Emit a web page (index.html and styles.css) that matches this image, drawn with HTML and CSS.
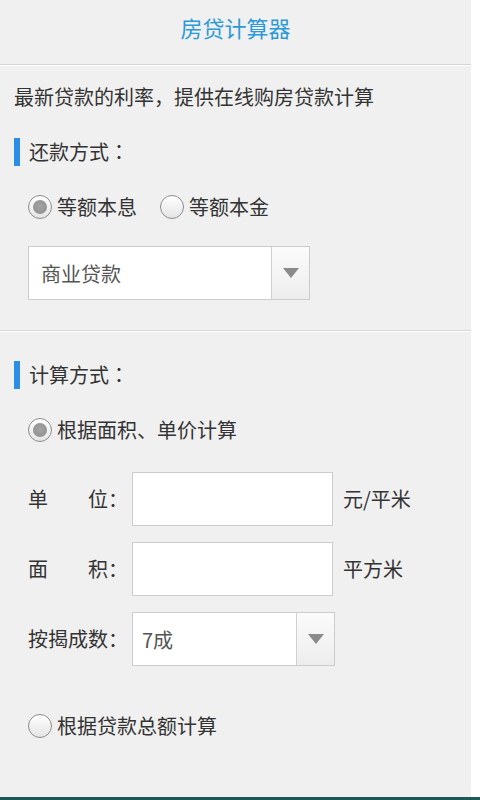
FILE: index.html
```html
<!DOCTYPE html>
<html lang="zh-CN">
<head>
<meta charset="utf-8">
<title>房贷计算器</title>
<link rel="stylesheet" href="styles.css">
</head>
<body>
<div class="screen">
  <div class="app">
    <header class="topbar"><h1 class="title">房贷计算器</h1></header>
    <p class="intro">最新贷款的利率<span class="punct">，</span>提供在线购房贷款计算</p>

    <section class="section first">
      <h2 class="sec-title">还款方式<span class="punct">：</span></h2>
      <div class="radio-row">
        <label class="radio checked"><span class="dot"></span>等额本息</label>
        <label class="radio"><span class="dot"></span>等额本金</label>
      </div>
      <div class="select wide">
        <span class="select-text">商业贷款</span>
        <span class="select-btn"><span class="tri"></span></span>
      </div>
    </section>

    <section class="section second">
      <h2 class="sec-title">计算方式<span class="punct">：</span></h2>
      <div class="radio-row">
        <label class="radio checked"><span class="dot"></span>根据面积、单价计算</label>
      </div>
      <div class="form">
        <div class="form-row">
          <span class="form-label">单　　位<span class="punct">：</span></span>
          <span class="input"></span>
          <span class="unit">元/平米</span>
        </div>
        <div class="form-row">
          <span class="form-label">面　　积<span class="punct">：</span></span>
          <span class="input"></span>
          <span class="unit">平方米</span>
        </div>
        <div class="form-row">
          <span class="form-label">按揭成数<span class="punct">：</span></span>
          <div class="select narrow">
            <span class="select-text">7成</span>
            <span class="select-btn"><span class="tri"></span></span>
          </div>
        </div>
      </div>
      <div class="radio-row last">
        <label class="radio"><span class="dot"></span>根据贷款总额计算</label>
      </div>
    </section>
  </div>
  <div class="bottom-bar"></div>
</div>
</body>
</html>
```

FILE: styles.css
```css
* { box-sizing: border-box; }

html, body {
  margin: 0;
  padding: 0;
  background: #ffffff;
}

body {
  font-family: "Noto Sans CJK SC", "Noto Sans", "Liberation Sans", sans-serif;
  color: #333333;
}

.punct {
  font-family: "Noto Sans CJK TC", "Noto Sans CJK SC", sans-serif;
}

.screen {
  width: 480px;
  height: 800px;
  display: flex;
  flex-direction: column;
  overflow: hidden;
}

.app {
  width: 471px;
  height: 797px;
  background: #f0f0f0;
  overflow: hidden;
}

.bottom-bar {
  height: 3px;
  width: 480px;
  background: #1c5a57;
}

.topbar {
  height: 65px;
  border-bottom: 1px solid #d4d4d4;
  box-shadow: 0 1px 0 #ffffff;
  padding-top: 12px;
}

.title {
  margin: 0;
  text-align: center;
  font-size: 22px;
  font-weight: normal;
  line-height: 30px;
  color: #2c9ad6;
}

.intro {
  margin: 18px 0 0 14px;
  font-size: 20px;
  line-height: 28px;
  color: #333333;
  white-space: nowrap;
}

.section.first {
  padding-bottom: 30px;
  border-bottom: 1px solid #d6d6d6;
}

.section.second {
  border-top: 1px solid #ffffff;
}

.sec-title {
  margin: 27px 0 0 14px;
  display: flex;
  align-items: center;
  height: 28px;
  font-size: 20px;
  font-weight: normal;
  line-height: 28px;
  color: #333333;
}

.section.second .sec-title {
  margin-top: 29px;
}

.sec-title::before {
  content: "";
  width: 6px;
  height: 28px;
  background: #2a8ee6;
  margin-right: 9px;
}

.radio-row {
  margin: 27px 0 0 28px;
  display: flex;
  align-items: center;
  gap: 23px;
  height: 28px;
}

.radio-row.last {
  margin-top: 46px;
}

.radio {
  display: flex;
  align-items: center;
  font-size: 20px;
  line-height: 28px;
  color: #333333;
  white-space: nowrap;
}

.dot {
  width: 24px;
  height: 24px;
  border-radius: 50%;
  border: 1.5px solid #8c8c8c;
  background: linear-gradient(#ffffff, #e4e4e4);
  margin-right: 5px;
  display: flex;
  align-items: center;
  justify-content: center;
  flex: none;
}

.radio.checked .dot::after {
  content: "";
  width: 14px;
  height: 14px;
  border-radius: 50%;
  background: radial-gradient(circle at 50% 45%, #a3a3a3, #8e8e8e);
}

.select {
  display: flex;
  height: 54px;
  border: 1px solid #cccccc;
  background: #ffffff;
}

.select.wide {
  margin: 25px 0 0 28px;
  width: 282px;
}

.select.narrow {
  width: 203px;
}

.select-text {
  flex: 1;
  display: flex;
  align-items: center;
  padding-left: 12px;
  font-size: 20px;
  color: #555555;
}

.select.narrow .select-text {
  padding-left: 9px;
}

.select-btn {
  width: 38px;
  border-left: 1px solid #d0d0d0;
  background: linear-gradient(#fbfbfb, #ededed);
  display: flex;
  align-items: center;
  justify-content: center;
}

.tri {
  width: 0;
  height: 0;
  border-left: 8px solid transparent;
  border-right: 8px solid transparent;
  border-top: 10px solid #8a8a8a;
}

.form {
  margin: 28px 0 0 28px;
  display: flex;
  flex-direction: column;
  gap: 16px;
}

.form-row {
  display: flex;
  align-items: center;
  height: 54px;
}

.form-label {
  width: 104px;
  font-size: 20px;
  line-height: 28px;
  color: #333333;
  white-space: nowrap;
}

.input {
  width: 201px;
  height: 54px;
  border: 1px solid #cccccc;
  background: #ffffff;
}

.unit {
  margin-left: 10px;
  font-size: 20px;
  line-height: 28px;
  color: #333333;
  white-space: nowrap;
}
```
